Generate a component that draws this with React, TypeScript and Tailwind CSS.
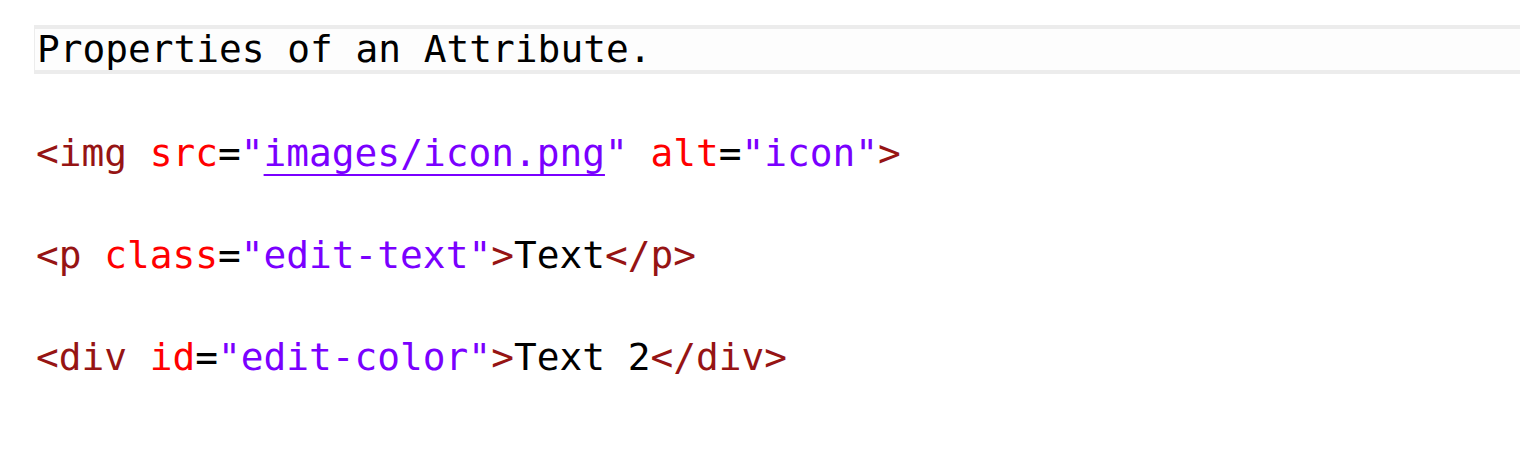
import React from 'react';

const Tag = ({ children }: { children: React.ReactNode }) => (
  <span className="text-[#961414]">{children}</span>
);
const Attr = ({ children }: { children: React.ReactNode }) => (
  <span className="text-[#ff0000]">{children}</span>
);
const Val = ({ children }: { children: React.ReactNode }) => (
  <span className="text-[#7a00ff]">{children}</span>
);

const App = (): JSX.Element => {
  return (
    <div className="h-[455px] w-[1520px] overflow-hidden bg-white font-['DejaVu_Sans_Mono',monospace] text-[37.8px] text-black">
      <div className="pt-[25px] pl-[34px]">
        <div className="-mr-4 border-y-4 border-l border-[#ececec] bg-[#fdfdfd] pl-[2px] leading-[41px]">
          Properties of an Attribute.
        </div>
      </div>
      <div className="mt-[57px] flex flex-col gap-[58px] pl-[36px] leading-[44px]">
        <div className="whitespace-pre">
          <Tag>&lt;img </Tag>
          <Attr>src</Attr>=<Val>&quot;</Val>
          <span className="text-[#7a00ff] underline decoration-2 underline-offset-[8px]">
            images/icon.png
          </span>
          <Val>&quot;</Val> <Attr>alt</Attr>=<Val>&quot;icon&quot;</Val>
          <Tag>&gt;</Tag>
        </div>
        <div className="whitespace-pre">
          <Tag>&lt;p </Tag>
          <Attr>class</Attr>=<Val>&quot;edit-text&quot;</Val>
          <Tag>&gt;</Tag>Text<Tag>&lt;/p&gt;</Tag>
        </div>
        <div className="whitespace-pre">
          <Tag>&lt;div </Tag>
          <Attr>id</Attr>=<Val>&quot;edit-color&quot;</Val>
          <Tag>&gt;</Tag>Text 2<Tag>&lt;/div&gt;</Tag>
        </div>
      </div>
    </div>
  );
};

export default App;
